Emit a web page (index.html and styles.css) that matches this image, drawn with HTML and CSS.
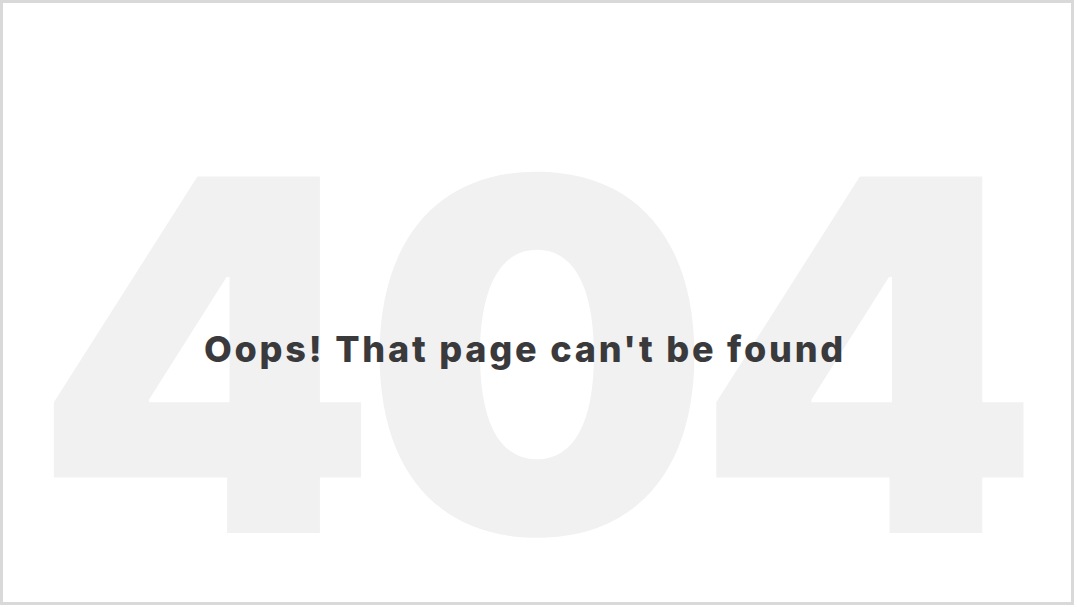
FILE: index.html
```html
<!DOCTYPE html>
<html lang="en-US">
<head>
	<meta charset="UTF-8" />
	<title>404 - Page not found</title>
	<link rel="stylesheet" href="styles.css">
</head>
<body>
	<div class="frame">
		<section class="errorPage">
			<div class="errorCode">404</div>
			<h1 class="errorTitle">Oops! That page can't be found</h1>
		</section>
	</div>
</body>
</html>
```
FILE: styles.css
```css
html, body {
	margin: 0;
	padding: 0;
	background: #fff;
}

.frame {
	box-sizing: border-box;
	width: 1074px;
	height: 605px;
	border: 3px solid #d9d9d9;
	overflow: hidden;
}

/* the big number and the title share one grid cell */
.errorPage {
	display: grid;
	justify-items: center;
	align-items: center;
	padding-top: 107px;
}
.errorCode,
.errorTitle {
	grid-area: 1 / 1;
}

.errorCode {
	padding-right: 15px;
	font-family: Inter, "Noto Sans", sans-serif;
	font-weight: 900;
	font-size: 490px;
	line-height: 1;
	letter-spacing: -15px;
	color: #f1f1f2;
	user-select: none;
}

.errorTitle {
	position: relative;
	margin: 0 0 12px;
	padding-right: 24px;
	font-family: Inter, "Noto Sans", sans-serif;
	font-weight: 800;
	font-size: 36px;
	letter-spacing: 2.8px;
	color: #3a3a3c;
}
```
